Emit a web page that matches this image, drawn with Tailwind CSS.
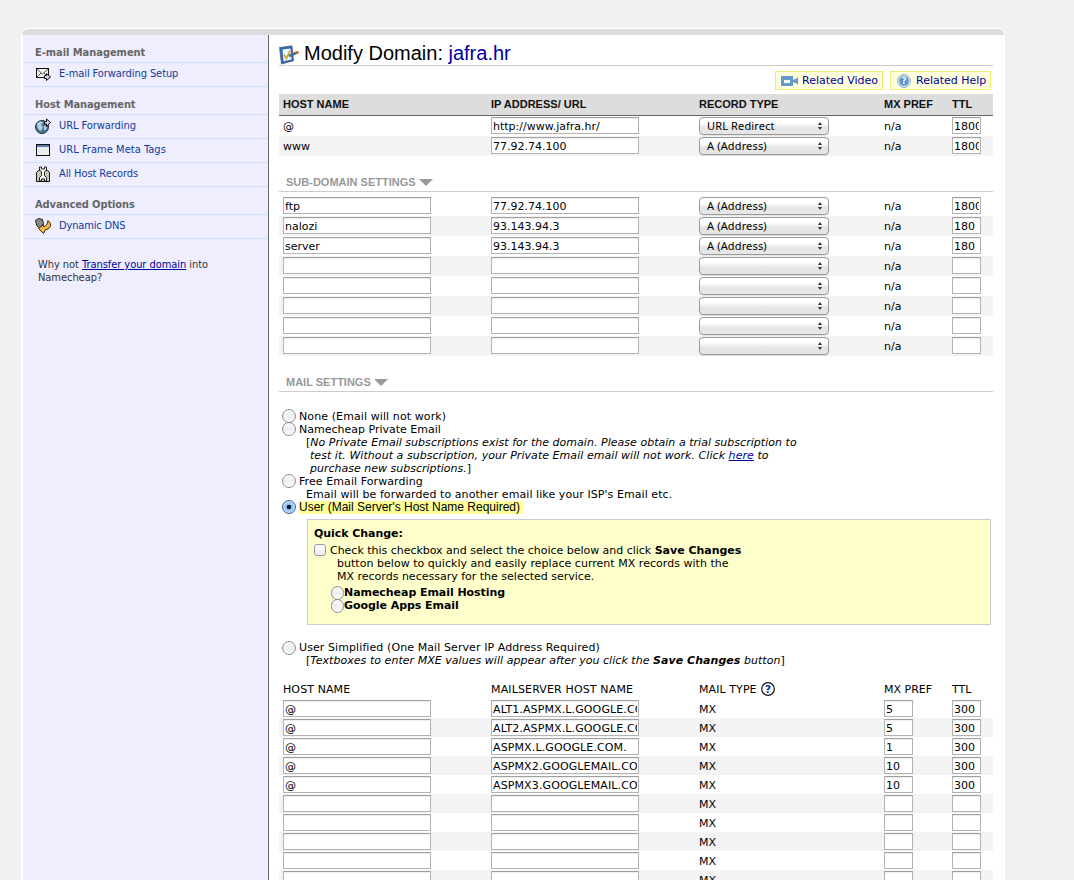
<!DOCTYPE html>
<html lang="en">

<head>
  <meta charset="UTF-8">
  <meta name="viewport" content="width=device-width, initial-scale=1.0">
  <title>Modify Domain: jafra.hr</title>
  <script src="https://cdn.jsdelivr.net/npm/@tailwindcss/browser@4"></script>
</head>

<body class="h-[880px] overflow-hidden bg-[#f1f1f1] pt-7 pl-[21px] font-['DejaVu_Sans',sans-serif] text-[11px] leading-[13px] text-black">

  <div class="w-[984px] h-[852px] overflow-hidden px-px pt-px bg-white rounded-t-lg">
    <div class="h-[6px] bg-[#dddddd] rounded-t-[6px]"></div>

    <div class="flex h-[845px] pl-px">

      <!-- Sidebar -->
      <div class="w-[246px] shrink-0 bg-[#eeeeff] border-r border-[#666666] font-['DejaVu_Sans_Condensed','DejaVu_Sans',sans-serif]">
        <h3 class="flex items-center h-7 pl-3 pt-[7px] border-b border-[#cce0ff] font-bold text-[#666666] tracking-[-0.04px]">E-mail Management</h3>
        <a href="#" class="flex items-center h-6 pl-3 pb-[2px] border-b border-[#cce0ff] text-[#113a9c] tracking-[-0.08px]">
          <svg class="w-4 h-4 mr-2" viewBox="0 0 16 16">
            <rect x="1.5" y="2.5" width="12" height="9" fill="#f4f4ee" stroke="#111" />
            <path d="M2 3l5.500 5L13 3M2 11l4-4M13 11L9 7" fill="none" stroke="#444" stroke-width=".9" />
            <path d="M9.500 9.500h2v-2l4 3.500-4 3.500v-2h-2z" fill="#d9d0ee" stroke="#111" />
          </svg>
          E-mail Forwarding Setup
        </a>
        <h3 class="flex items-center h-7 pl-3 pt-[7px] border-b border-[#cce0ff] font-bold text-[#666666] tracking-[-0.1px]">Host Management</h3>
        <a href="#" class="flex items-center h-6 pl-3 pb-[2px] border-b border-[#cce0ff] text-[#113a9c] tracking-[-0.06px]">
          <svg class="w-4 h-4 mr-2" viewBox="0 0 16 16">
            <circle cx="7" cy="9" r="6.500" fill="#47789c" stroke="#1b2a36" />
            <path d="M2 6c2-3 4-3 6-2l-2 3 2 2-2 4C3 12 2 9 2 6zM9 8l3 0-1 4-2 0z" fill="#b5cfdf" />
            <path d="M9.500 3.500h2V1l4 3.500-4 4V6h-2z" fill="#d9d0ee" stroke="#111" />
          </svg>
          URL Forwarding
        </a>
        <a href="#" class="flex items-center h-6 pl-3 pb-[2px] border-b border-[#cce0ff] text-[#113a9c] tracking-[0.04px]">
          <svg class="w-4 h-4 mr-2" viewBox="0 0 16 16">
            <rect x="1.500" y="2.500" width="13" height="11" fill="#ececec" stroke="#111" />
            <rect x="2" y="3" width="12" height="2" fill="#5a7fa6" />
          </svg>
          URL Frame Meta Tags
        </a>
        <a href="#" class="flex items-center h-6 pl-3 pb-[2px] border-b border-[#cce0ff] text-[#113a9c] tracking-[-0.08px]">
          <svg class="w-4 h-4 mr-2" viewBox="0 0 16 16">
            <path d="M1.500 6.500l2-2h9l2 2v9h-13z" fill="#c6ccb0" stroke="#111" />
            <path d="M4.500 1v3l2 2v3.500l-2 2V15h2v-2h3v2h2v-3.500l-2-2V6l2-2V1h-2v2h-3V1z" fill="#f4f4f4" stroke="#111" stroke-width=".9" />
          </svg>
          All Host Records
        </a>
        <h3 class="flex items-center h-7 pl-3 pt-[7px] border-b border-[#cce0ff] font-bold text-[#666666] tracking-[-0.1px]">Advanced Options</h3>
        <a href="#" class="flex items-center h-6 pl-3 pb-[2px] border-b border-[#cce0ff] text-[#113a9c] tracking-[-0.15px]">
          <svg class="w-4 h-4 mr-2" viewBox="0 0 16 16">
            <path d="M.5 2.500l3-2 4 1 1 4-3.500 5-3-2.500z" fill="#888" stroke="#222" />
            <path d="M13 2.500c2.500 2 3 4 2 6.500-1 1.500-2.500 2.500-4.500 2.500l-2 4-5-5L8.500 6.500v2c2.500 0 4-2 4.500-6z" fill="#f5b945" stroke="#3a2500" />
          </svg>
          Dynamic DNS
        </a>
        <p class="w-[200px] mt-[19px] ml-[15px] text-[#333333] tracking-[-0.05px]">Why not <a href="#" class="text-[#00009c] underline">Transfer your domain</a> into<br>Namecheap?</p>
      </div>

      <!-- Main column -->
      <div class="w-[714px] shrink-0 ml-[10px]">
        <h1 class="flex h-[31px] pt-[7px] border-b border-[#cccccc] font-['Liberation_Sans',sans-serif] text-[20px] leading-[22px]">
          <svg class="w-5 h-5 mt-[3px] mr-[5px]" viewBox="0 0 20 20">
            <path d="M.5 2.500L13 .8l1.500 15L2.500 19z" fill="#2b6cb8" stroke="#4c5a68" stroke-width=".7" />
            <path d="M3.500 4.500L11.500 3.500l1 11-8 1.700z" fill="#eef6ff" />
            <path d="M5 9.500l2.500 4L11 5.500" fill="none" stroke="#d9a520" stroke-width="1.700" />
            <path d="M10 11l7-3" stroke="#3d6ea5" stroke-width="2.600" />
            <path d="M16 8.300l3.500-1.300" stroke="#c9583a" stroke-width="2.600" />
          </svg>
          <span>Modify Domain: <span class="text-[#00009c]">jafra.hr</span></span>
        </h1>

        <div class="flex justify-end gap-[7px] h-7 pt-[5px] pr-[2px] text-[#00009c]">
          <a href="#" class="flex items-center w-[108px] h-[19px] pl-[5px] bg-[#ffffdd] border border-[#eeee77]">
            <svg class="w-[17px] h-[10px] mt-px mr-1" viewBox="0 0 17 10">
              <path d="M0 0h12v4l2-1h1l2-2v8l-2-2h-1l-2-1v4H0z" fill="#6699cc" />
              <rect x="3" y="4" width="6" height="3" fill="#fff" />
            </svg>
            Related Video
          </a>
          <a href="#" class="flex items-center w-[101px] h-[19px] pl-[6px] bg-[#ffffdd] border border-[#eeee77]">
            <svg class="w-[14px] h-[14px] mt-px mr-[5px]" viewBox="0 0 14 14">
              <circle cx="7" cy="7" r="6.400" fill="#dce9f6" stroke="#86a8cc" />
              <circle cx="7" cy="7" r="4.800" fill="#5b93cf" />
              <text x="7" y="10.200" font-size="8.500" font-weight="bold" text-anchor="middle" fill="#fff">?</text>
            </svg>
            Related Help
          </a>
        </div>

        <!-- Host records -->
        <div class="grid grid-cols-[208px_208px_185px_68px_1fr] items-center h-[22px] pl-1 bg-[#dddddd] border-b border-[#666666] font-['Liberation_Sans',sans-serif] font-bold text-[#111111]">
          <span>HOST NAME</span>
          <span>IP ADDRESS/ URL</span>
          <span>RECORD TYPE</span>
          <span>MX PREF</span>
          <span>TTL</span>
        </div>
        <div id="hostRows"></div>

        <h2 class="flex items-center gap-[3px] h-9 pl-[7px] pt-[17px] border-b border-[#cccccc] font-['Liberation_Sans',sans-serif] font-bold text-[#999999]">
          SUB-DOMAIN SETTINGS
          <svg class="w-[14px] h-[7px]" viewBox="0 0 14 7"><path d="M0 0h14L7 7z" fill="#999999" /></svg>
        </h2>
        <div id="subRows" class="mt-1"></div>

        <h2 class="flex items-center gap-[3px] h-9 pl-[7px] pt-[17px] border-b border-[#cccccc] font-['Liberation_Sans',sans-serif] font-bold text-[#999999]">
          MAIL SETTINGS
          <svg class="w-[14px] h-[7px]" viewBox="0 0 14 7"><path d="M0 0h14L7 7z" fill="#999999" /></svg>
        </h2>

        <!-- Mail options -->
        <div class="pt-[18px] pl-[3px]">
          <label class="flex items-center h-[13px] gap-[3px] tracking-[0.1px]">
            <input type="radio" name="mail" class="appearance-none w-[14px] h-[14px] mb-[2px] rounded-full border border-[#8c8c8c] bg-linear-to-b from-white via-[#ededed] to-white">
            None (Email will not work)
          </label>
          <label class="flex items-center h-[13px] gap-[3px]">
            <input type="radio" name="mail" class="appearance-none w-[14px] h-[14px] mb-[2px] rounded-full border border-[#8c8c8c] bg-linear-to-b from-white via-[#ededed] to-white">
            Namecheap Private Email
          </label>
          <p class="pl-6 whitespace-nowrap tracking-[0.03px]">[<i>No Private Email subscriptions exist for the domain. Please obtain a trial subscription to</i></p>
          <p class="pl-7 whitespace-nowrap italic tracking-[0.05px]">test it. Without a subscription, your Private Email email will not work. Click <a href="#" class="text-[#0000aa] underline">here</a> to</p>
          <p class="pl-7 whitespace-nowrap"><i>purchase new subscriptions.</i>]</p>
          <label class="flex items-center h-[13px] gap-[3px] tracking-[0.08px]">
            <input type="radio" name="mail" class="appearance-none w-[14px] h-[14px] mb-[2px] rounded-full border border-[#8c8c8c] bg-linear-to-b from-white via-[#ededed] to-white">
            Free Email Forwarding
          </label>
          <p class="pl-6 whitespace-nowrap tracking-[0.07px]">Email will be forwarded to another email like your ISP's Email etc.</p>
          <label class="flex items-center h-[13px] gap-[3px]">
            <input type="radio" name="mail" checked class="appearance-none w-[14px] h-[14px] mb-[2px] rounded-full border border-[#3c5f96] bg-[radial-gradient(circle,#0a1a33_0_2px,#8fc0f0_2.600px,#cfe6fb_7px)]">
            <span class="h-[13px] pr-[3px] bg-[#ffff99] font-['Liberation_Sans',sans-serif] text-[12px]">User (Mail Server's Host Name Required)</span>
          </label>

          <div class="w-[684px] h-[106px] mt-[5px] ml-[25px] pl-[6px] pt-[7px] bg-[#ffffcc] border border-[#cccccc]">
            <p class="font-bold tracking-[-0.05px]">Quick Change:</p>
            <label class="flex items-center h-[13px] mt-1 gap-1 whitespace-nowrap">
              <input type="checkbox" class="appearance-none w-3 h-3 mb-px rounded-[3px] border border-[#999999] bg-linear-to-b from-white to-[#ebebeb]">
              <span class="tracking-[-0.02px]">Check this checkbox and select the choice below and click <b>Save Changes</b></span>
            </label>
            <p class="pl-[23px] tracking-[0.03px]">button below to quickly and easily replace current MX records with the</p>
            <p class="pl-[23px]">MX records necessary for the selected service.</p>
            <label class="flex items-center h-[13px] mt-[3px] pl-[17px] font-bold tracking-[-0.05px]">
              <input type="radio" name="quick" class="appearance-none w-[13px] h-[14px] rounded-full border border-[#8c8c8c] bg-linear-to-b from-white via-[#ededed] to-white">
              Namecheap Email Hosting
            </label>
            <label class="flex items-center h-[13px] pl-[17px] font-bold tracking-[-0.05px]">
              <input type="radio" name="quick" class="appearance-none w-[13px] h-[14px] rounded-full border border-[#8c8c8c] bg-linear-to-b from-white via-[#ededed] to-white">
              Google Apps Email
            </label>
          </div>

          <label class="flex items-center h-[13px] mt-4 gap-[3px] tracking-[0.09px]">
            <input type="radio" name="mail" class="appearance-none w-[14px] h-[14px] rounded-full border border-[#8c8c8c] bg-linear-to-b from-white via-[#ededed] to-white">
            User Simplified (One Mail Server IP Address Required)
          </label>
          <p class="pl-6 whitespace-nowrap tracking-[0.04px]">[<i>Textboxes to enter MXE values will appear after you click the <b>Save Changes</b> button</i>]</p>
        </div>

        <!-- MX records -->
        <div class="grid grid-cols-[208px_208px_185px_68px_1fr] items-center h-[18px] mt-[14px] pl-1 pb-[2px]">
          <span class="tracking-[0.1px]">HOST NAME</span>
          <span class="tracking-[0.14px]">MAILSERVER HOST NAME</span>
          <span class="flex items-center gap-1 tracking-[0.08px]">MAIL TYPE
            <svg class="w-[14px] h-[14px]" viewBox="0 0 14 14">
              <circle cx="7" cy="7" r="6.300" fill="#fff" stroke="#111" stroke-width="1.200" />
              <text x="7" y="11" font-size="11" font-weight="bold" text-anchor="middle" fill="#003399">?</text>
            </svg>
          </span>
          <span>MX PREF</span>
          <span>TTL</span>
        </div>
        <div id="mxRows"></div>
      </div>
    </div>
  </div>

  <script>
    const input = (value, width) => `<input type="text" value="${value}" class="${width} block h-[17px] px-[1px] pt-px bg-white border border-[#b2b2b2] border-t-[#a0a0a0] inset-shadow-[0_1px_0_#eeeeee] outline-none">`;

    const select = (label) => `
      <div class="flex items-center justify-between w-[130px] h-[18px] pl-[7px] pr-[5px] rounded-[4px] border border-[#999999] bg-linear-to-b from-white from-30% to-[#e6e6e6] to-60% font-['Noto_Sans',sans-serif] shadow-[0_1px_0_#00000018]">
        <span class="pb-[2px] tracking-[0.15px]">${label}</span>
        <svg class="w-[6px] h-2" viewBox="0 0 6 8"><path d="M1 3l2-3 2 3zM1 5l2 3 2-3z" fill="#333" /></svg>
      </div>`;

    const hosts = [
      ['@', 'http://www.jafra.hr/', 'URL Redirect', '1800'],
      ['www', '77.92.74.100', 'A (Address)', '1800'],
    ];

    const subs = [
      ['ftp', '77.92.74.100', 'A (Address)', '1800'],
      ['nalozi', '93.143.94.3', 'A (Address)', '180'],
      ['server', '93.143.94.3', 'A (Address)', '180'],
      ['', '', '', ''],
      ['', '', '', ''],
      ['', '', '', ''],
      ['', '', '', ''],
      ['', '', '', ''],
    ];

    const mx = [
      ['@', 'ALT1.ASPMX.L.GOOGLE.COM.', '5', '300'],
      ['@', 'ALT2.ASPMX.L.GOOGLE.COM.', '5', '300'],
      ['@', 'ASPMX.L.GOOGLE.COM.', '1', '300'],
      ['@', 'ASPMX2.GOOGLEMAIL.COM.', '10', '300'],
      ['@', 'ASPMX3.GOOGLEMAIL.COM.', '10', '300'],
      ['', '', '', ''],
      ['', '', '', ''],
      ['', '', '', ''],
      ['', '', '', ''],
      ['', '', '', ''],
    ];

    const hostRow = (host, [, ip, type, ttl]) => `
      <div class="grid grid-cols-[208px_208px_185px_68px_1fr] items-start h-5 pl-1 pt-px even:bg-[#f3f3f3]">
        ${host}
        ${input(ip, 'w-[148px]')}
        ${select(type)}
        <span class="pt-[3px]">n/a</span>
        ${input(ttl, 'w-[29px]')}
      </div>`;

    document.getElementById('hostRows').innerHTML = hosts.map(r => hostRow(`<span class="pt-[3px]">${r[0]}</span>`, r)).join('');
    document.getElementById('subRows').innerHTML = subs.map(r => hostRow(input(r[0], 'w-[148px]'), r)).join('');

    document.getElementById('mxRows').innerHTML = mx.map(([host, server, pref, ttl]) => `
      <div class="grid grid-cols-[208px_208px_185px_68px_1fr] items-start h-[19px] pl-1 pt-px even:bg-[#f3f3f3]">
        ${input(host, 'w-[148px]')}
        ${input(server, 'w-[148px] tracking-[0.12px]')}
        <span class="pt-[3px]">MX</span>
        ${input(pref, 'w-[29px]')}
        ${input(ttl, 'w-[29px]')}
      </div>`).join('');
  </script>
</body>

</html>
